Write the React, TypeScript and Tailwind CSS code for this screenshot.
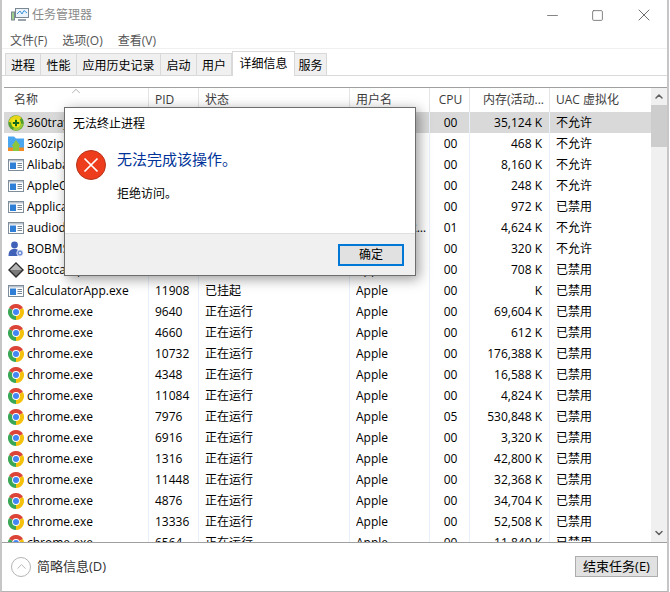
import { ChevronDown, ChevronUp, Minus, Square, X } from "lucide-react";

const tabs = [
  { label: "进程", w: "w-[36px]" },
  { label: "性能", w: "w-[36px]" },
  { label: "应用历史记录", w: "w-[84px]" },
  { label: "启动", w: "w-[36px]" },
  { label: "用户", w: "w-[35px]" },
  { label: "详细信息", w: "w-[63px]", active: true },
  { label: "服务", w: "w-[32px]" },
];

type Row = {
  name: string;
  icon: "360" | "zip" | "app" | "user" | "diamond" | "chrome";
  pid: string;
  status: string;
  user: string;
  cpu: string;
  mem: string;
  uac: string;
  selected?: boolean;
};

const chrome = (pid: string, cpu: string, mem: string): Row => ({
  name: "chrome.exe",
  icon: "chrome",
  pid,
  status: "正在运行",
  user: "Apple",
  cpu,
  mem,
  uac: "已禁用",
});

const rows: Row[] = [
  { name: "360tray.exe", icon: "360", pid: "5484", status: "正在运行", user: "Apple", cpu: "00", mem: "35,124 K", uac: "不允许", selected: true },
  { name: "360zipUpdate.exe", icon: "zip", pid: "6120", status: "正在运行", user: "Apple", cpu: "00", mem: "468 K", uac: "不允许" },
  { name: "AlibabaProtect.exe", icon: "app", pid: "3852", status: "正在运行", user: "SYSTEM", cpu: "00", mem: "8,160 K", uac: "不允许" },
  { name: "AppleOSSMgr.exe", icon: "app", pid: "3624", status: "正在运行", user: "SYSTEM", cpu: "00", mem: "248 K", uac: "不允许" },
  { name: "ApplicationFrame.exe", icon: "app", pid: "9032", status: "正在运行", user: "Apple", cpu: "00", mem: "972 K", uac: "已禁用" },
  { name: "audiodg.exe", icon: "app", pid: "7712", status: "正在运行", user: "LOCAL SERVICE", cpu: "01", mem: "4,624 K", uac: "不允许" },
  { name: "BOBMService.exe", icon: "user", pid: "3740", status: "正在运行", user: "SYSTEM", cpu: "00", mem: "320 K", uac: "不允许" },
  { name: "Bootcamp.exe", icon: "diamond", pid: "8216", status: "正在运行", user: "Apple", cpu: "00", mem: "708 K", uac: "已禁用" },
  { name: "CalculatorApp.exe", icon: "app", pid: "11908", status: "已挂起", user: "Apple", cpu: "00", mem: "K", uac: "已禁用" },
  chrome("9640", "00", "69,604 K"),
  chrome("4660", "00", "612 K"),
  chrome("10732", "00", "176,388 K"),
  chrome("4348", "00", "16,588 K"),
  chrome("11084", "00", "4,824 K"),
  chrome("7976", "05", "530,848 K"),
  chrome("6916", "00", "3,320 K"),
  chrome("1316", "00", "42,800 K"),
  chrome("11448", "00", "32,368 K"),
  chrome("4876", "00", "34,704 K"),
  chrome("13336", "00", "52,508 K"),
  chrome("6564", "00", "11,840 K"),
];

function ProcessIcon({ type }: { type: Row["icon"] }) {
  if (type === "chrome") {
    return (
      <svg width="16" height="16" viewBox="0 0 16 16" className="shrink-0">
        <path d="M8 8 L1.07 4 A8 8 0 0 1 14.93 4 Z" fill="#db4437" />
        <path d="M8 8 L14.93 4 A8 8 0 0 1 8 16 Z" fill="#f4c20d" />
        <path d="M8 8 L8 16 A8 8 0 0 1 1.07 4 Z" fill="#3aa757" />
        <circle cx="8" cy="8" r="3.9" fill="#fff" />
        <circle cx="8" cy="8" r="3" fill="#4285f4" />
      </svg>
    );
  }
  if (type === "360") {
    return (
      <svg width="16" height="16" viewBox="0 0 16 16" className="shrink-0">
        <circle cx="8" cy="8" r="7.8" fill="#4f9d2a" />
        <path d="M0.8 7 A7.4 7.4 0 0 1 13.5 3 L11.5 5 A4.8 4.8 0 0 0 3.3 7.5 Z" fill="#e9d41a" />
        <path d="M15.2 9 A7.4 7.4 0 0 1 5 14.8 L6 12.3 A4.8 4.8 0 0 0 12.7 8.5 Z" fill="#9ccb3b" />
        <circle cx="8" cy="8" r="4.8" fill="#f5e616" />
        <path d="M8 4.8 V11.2 M4.8 8 H11.2" stroke="#14691a" strokeWidth="2" />
      </svg>
    );
  }
  if (type === "zip") {
    return (
      <svg width="16" height="16" viewBox="0 0 16 16" className="shrink-0">
        <path d="M0 0.5 H6 L8 2.5 H16 V15 H0 Z" fill="#4aa6ee" />
        <rect x="0" y="11.5" width="16" height="3.5" fill="#f08a24" />
        <path d="M8 4 L12.5 10 H11 V15 H5 V10 H3.5 Z" fill="#8cc63f" />
      </svg>
    );
  }
  if (type === "user") {
    return (
      <svg width="16" height="16" viewBox="0 0 16 16" className="shrink-0">
        <circle cx="6.5" cy="4" r="3.4" fill="#3f62b8" />
        <path d="M0.5 15 C0.5 9.5 3 8 6.5 8 C10 8 12 9.5 12 15 Z" fill="#3f62b8" />
        <circle cx="12" cy="12" r="3.2" fill="#6f8fd8" stroke="#fff" strokeWidth="0.8" />
        <circle cx="12" cy="12" r="1" fill="#fff" />
      </svg>
    );
  }
  if (type === "diamond") {
    return (
      <svg width="16" height="16" viewBox="0 0 16 16" className="shrink-0">
        <path d="M8 0 L16 8 L8 16 L0 8 Z" fill="#2e2e2e" />
        <path d="M8 2 L14 8 L8 14 L2 8 Z" fill="#7a7a7a" />
        <path d="M8 2 L14 8 L2 8 Z" fill="#b4b4b4" />
      </svg>
    );
  }
  return (
    <svg width="16" height="16" viewBox="0 0 16 16" className="shrink-0">
      <rect x="0.5" y="2.5" width="15" height="11" fill="#fff" stroke="#7f8c99" />
      <rect x="1" y="3" width="14" height="1.5" fill="#b9c4cf" />
      <rect x="2" y="5.5" width="6" height="6.5" fill="#2f7fd6" />
      <path d="M9.5 6.5 H14 M9.5 8.5 H14 M9.5 10.5 H14" stroke="#7a8794" />
    </svg>
  );
}

function AppIcon() {
  return (
    <svg width="18" height="16" viewBox="0 0 18 16">
      <rect x="4.5" y="1.5" width="13" height="9" fill="#eaf3fb" stroke="#7b8791" />
      <path d="M6 7 L9 4 L11 7 L13 3.5 L16 6" fill="none" stroke="#3d93d8" />
      <rect x="0.5" y="5" width="3" height="8" fill="#9fd08b" stroke="#7b8791" />
      <path d="M7 12 H15 V14 H7 Z" fill="#9aa3ab" />
    </svg>
  );
}

export default function App() {
  return (
    <div className="relative flex h-[592px] w-[669px] flex-col overflow-hidden border-x-2 border-b border-x-[#c6c6c6] border-b-[#b4b4b4] bg-white font-['Open_Sans','Noto_Sans_CJK_SC',sans-serif] text-[12px] text-black">
      <div className="flex h-[30px] shrink-0 items-center pl-[9px]">
        <AppIcon />
        <span className="ml-[3px] text-[#8b8b8b]">任务管理器</span>
        <div className="ml-auto flex items-center pr-[13px] text-[#6f6f6f]">
          <Minus size={17} strokeWidth={1.2} />
          <Square size={13} strokeWidth={1.6} className="ml-[30px]" />
          <X size={20} strokeWidth={1.2} className="ml-[30px]" />
        </div>
      </div>

      <div className="flex h-[19px] shrink-0 items-center gap-[15px] border-b border-[#f0f0f0] pl-[8px] pt-[3px] text-[#555555]">
        <span>文件(F)</span>
        <span>选项(O)</span>
        <span>查看(V)</span>
      </div>

      <div className="flex h-[27px] shrink-0 items-end border-b border-[#d9d9d9] pl-[3px]">
        {tabs.map((tab) =>
          tab.active ? (
            <div
              key={tab.label}
              className={`${tab.w} -mb-px flex h-[25px] items-center justify-center border-x border-t border-[#d9d9d9] bg-white`}
            >
              {tab.label}
            </div>
          ) : (
            <div
              key={tab.label}
              className={`${tab.w} flex h-[22px] items-center justify-center border-r border-t border-[#d9d9d9] bg-[#f0f0f0] pt-[2px] first:border-l`}
            >
              {tab.label}
            </div>
          ),
        )}
      </div>

      <div className="h-[11px] shrink-0" />

      <div className="ml-[2px] flex min-h-0 flex-1 border-t border-[#a0a0a0]">
        <div className="min-w-0 flex-1 overflow-hidden">
          <div className="relative grid h-[24px] grid-cols-[145px_50px_151px_80px_40px_80px_100px] items-stretch leading-[24px] text-[#3c3c3c]">
            <ChevronUp size={14} strokeWidth={1} className="absolute left-[65px] top-[-4px] text-[#777777]" />
            <span className="border-r border-[#e5e5e5] pl-[10px]">名称</span>
            <span className="border-r border-[#e5e5e5] pl-[6px]">PID</span>
            <span className="border-r border-[#e5e5e5] pl-[6px]">状态</span>
            <span className="border-r border-[#e5e5e5] pl-[6px]">用户名</span>
            <span className="border-r border-[#e5e5e5] pl-[2px] text-center">CPU</span>
            <span className="truncate border-r border-[#e5e5e5] pr-[5px] text-right">内存(活动...</span>
            <span className="pl-[6px]">UAC 虚拟化</span>
          </div>
          {rows.map((row) => (
            <div
              key={row.pid}
              className={`grid h-[21px] grid-cols-[145px_50px_151px_80px_40px_80px_100px] items-stretch ${row.selected ? "bg-[#d9d9d9]" : ""}`}
            >
              <div className="flex items-center gap-[3px] overflow-hidden border-r border-[#e8f0fb] pl-[4px]">
                <ProcessIcon type={row.icon} />
                <span className="truncate">{row.name}</span>
              </div>
              <div className="flex items-center border-r border-[#e8f0fb] pl-[6px]">{row.pid}</div>
              <div className="flex items-center border-r border-[#e8f0fb] pl-[6px]">{row.status}</div>
              <div className="flex items-center overflow-hidden border-r border-[#e8f0fb] pl-[6px]">
                <span className="truncate">{row.user}</span>
              </div>
              <div className="flex items-center justify-center border-r border-[#e8f0fb] pl-[2px]">{row.cpu}</div>
              <div className="flex items-center justify-end border-r border-[#e8f0fb] pr-[7px]">{row.mem}</div>
              <div className="flex items-center pl-[6px]">{row.uac}</div>
            </div>
          ))}
        </div>
        <div className="flex w-[16px] shrink-0 flex-col items-center bg-[#f0f0f0] text-[#606060]">
          <ChevronUp size={12} strokeWidth={3} className="my-[2px] h-[13px]" />
          <div className="h-[42px] w-full bg-[#cdcdcd]" />
          <ChevronDown size={12} strokeWidth={3} className="mb-[3px] mt-auto" />
        </div>
      </div>

      <div className="flex h-[49px] shrink-0 items-center border-t border-[#a0a0a0] pb-[1px] pl-[9px] pr-[9px]">
        <div className="flex size-[20px] items-center justify-center rounded-full border border-[#b4b4b4] text-[#8f8f8f]">
          <ChevronUp size={15} strokeWidth={1} />
        </div>
        <span className="ml-[6px] text-[13px] text-[#333333]">简略信息(D)</span>
        <button className="ml-auto flex h-[21px] w-[83px] items-center justify-center border border-[#adadad] bg-[#e1e1e1] text-[13px] leading-none">
          结束任务(E)
        </button>
      </div>

      <div className="absolute left-[62px] top-[107px] flex h-[169px] w-[352px] flex-col border border-[#6d6d6d] bg-white shadow-[3px_3px_12px_rgba(0,0,0,0.4)]">
        <div className="pl-[8px] pt-[7px] leading-[18px]">无法终止进程</div>
        <div className="flex flex-1 items-start pl-[11px] pt-[13px]">
          <div className="mt-[4px] flex size-[30px] shrink-0 items-center justify-center rounded-full border border-[#b5331a] bg-[#ee3d1d]">
            <svg width="16" height="16" viewBox="0 0 16 16">
              <path d="M1.5 1.5 L14.5 14.5 M14.5 1.5 L1.5 14.5" stroke="#fff" strokeWidth="1.7" />
            </svg>
          </div>
          <div className="ml-[11px] flex flex-col">
            <span className="text-[15px] leading-[26px] text-[#003399]">无法完成该操作。</span>
            <span className="mt-[13px] leading-[18px]">拒绝访问。</span>
          </div>
        </div>
        <div className="flex h-[42px] shrink-0 items-center justify-end border-t border-[#dfdfdf] bg-[#f0f0f0] pr-[11px]">
          <button className="flex h-[22px] w-[66px] items-center justify-center border-2 border-[#0078d7] bg-[#e1e1e1] leading-none">
            确定
          </button>
        </div>
      </div>
    </div>
  );
}
